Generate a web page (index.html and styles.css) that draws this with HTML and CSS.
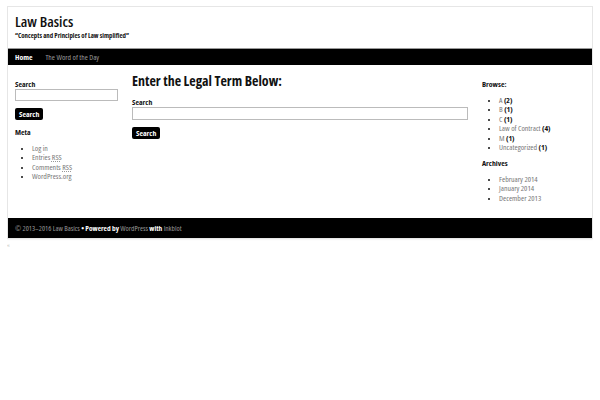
FILE: index.html
```html
<!DOCTYPE html>
<html><head><meta charset="utf-8"><link rel="stylesheet" href="styles.css"></head>
<body>
<div class="page">
  <header class="site-header">
    <h1 class="site-title">Law Basics</h1>
    <p class="tagline">“Concepts and Principles of Law simplified”</p>
  </header>
  <nav class="menu">
    <a class="current" href="#">Home</a>
    <a href="#">The Word of the Day</a>
  </nav>
  <div class="content">
    <aside class="sidebar">
      <section class="widget">
        <label class="label">Search</label>
        <input class="field" type="text">
        <button class="btn">Search</button>
      </section>
      <section class="widget">
        <h3 class="widget-title">Meta</h3>
        <ul class="list">
          <li><a href="#">Log in</a></li>
          <li><a href="#">Entries <abbr>RSS</abbr></a></li>
          <li><a href="#">Comments <abbr>RSS</abbr></a></li>
          <li><a href="#">WordPress.org</a></li>
        </ul>
      </section>
    </aside>
    <main class="main">
      <h2 class="page-title">Enter the Legal Term Below:</h2>
      <label class="label">Search</label>
      <input class="field wide" type="text">
      <button class="btn">Search</button>
    </main>
    <aside class="sidebar">
      <section class="widget">
        <h3 class="widget-title first">Browse:</h3>
        <ul class="list">
          <li><a href="#">A</a> <b>(2)</b></li>
          <li><a href="#">B</a> <b>(1)</b></li>
          <li><a href="#">C</a> <b>(1)</b></li>
          <li><a href="#">Law of Contract</a> <b>(4)</b></li>
          <li><a href="#">M</a> <b>(1)</b></li>
          <li><a href="#">Uncategorized</a> <b>(1)</b></li>
        </ul>
      </section>
      <section class="widget">
        <h3 class="widget-title archives">Archives</h3>
        <ul class="list">
          <li><a href="#">February 2014</a></li>
          <li><a href="#">January 2014</a></li>
          <li><a href="#">December 2013</a></li>
        </ul>
      </section>
    </aside>
  </div>
  <footer class="footer"><span class="dim">© 2013–2016 Law Basics</span> <b>• Powered by</b> <span class="dim">WordPress</span> <b>with</b> <span class="dim">Inkblot</span></footer>
</div>
<div class="after">«</div>
</body></html>
```
FILE: styles.css
```css
html, body { background: #fff; }
body {
  margin: 6px 7px;
  font-family: "Open Sans", sans-serif;
  font-stretch: condensed;
  font-size: 7.8px;
  color: #111;
}
.page {
  width: 586px;
  box-sizing: border-box;
  border: 1px solid #e6e6e6;
  box-shadow: 0 0 2px rgba(0,0,0,0.12);
  background: #fff;
}
.site-header {
  height: 41px;
  padding: 5px 7px 0;
  box-sizing: border-box;
}
.site-title {
  margin: 0;
  font-size: 15px;
  line-height: 18px;
  font-weight: 600;
  color: #111;
}
.tagline {
  margin: 1px 0 0;
  font-size: 6.8px;
  font-weight: 700;
  line-height: 9px;
}
.menu {
  background: #000;
  height: 16px;
  display: flex;
  align-items: center;
  gap: 13px;
  padding: 0 7px;
  border-top: 1px solid #999;
}
.menu a {
  color: #999;
  text-decoration: none;
  font-size: 7.7px;
}
.menu a.current { color: #fff; font-weight: 700; }
.content {
  display: flex;
  gap: 14px;
  padding: 7px 7px 0;
  height: 153px;
  box-sizing: border-box;
}
.sidebar { width: 103px; flex: none; padding-top: 7px; }
.main { width: 336px; flex: none; display: flex; flex-direction: column; align-items: flex-start; }
.widget { display: flex; flex-direction: column; align-items: flex-start; }
.label { font-weight: 700; font-size: 7.8px; line-height: 10px; }
.field {
  box-sizing: border-box;
  width: 103px;
  height: 12px;
  border: 1px solid #bbb;
  margin: 0 0 7px;
  padding: 0;
  background: #fff;
}
.field.wide { width: 336px; height: 13px; }
.btn {
  background: #000;
  color: #fff;
  border: 0;
  border-radius: 2px;
  font-family: inherit;
  font-stretch: condensed;
  font-weight: 700;
  font-size: 7.8px;
  height: 12px;
  padding: 0 4px;
  line-height: 12px;
}
.widget-title {
  margin: 7px 0 0;
  font-size: 7.8px;
  line-height: 10px;
  font-weight: 700;
}
.widget-title.first { margin-top: 0; }
.widget-title.archives { margin-top: 5.5px; }
.page-title {
  margin: 0 0 7px;
  font-size: 14px;
  line-height: 18px;
  font-weight: 700;
}
.list {
  margin: 7px 0 0;
  padding-left: 17px;
  line-height: 9.4px;
}
.list li { font-size: 7.8px; }
.list li::marker { color: #111; font-size: 6px; }
.list a { color: #777; text-decoration: none; }
.list b { font-weight: 700; color: #111; }
abbr { text-decoration: underline dotted #999; }
.footer {
  background: #000;
  height: 20px;
  line-height: 20px;
  padding: 0 7px;
  color: #fff;
  font-size: 7.4px;
}
.footer .dim { color: #999; }
.footer b { font-weight: 700; }
.after { font-size: 6px; color: #bbb; margin-top: 2px; line-height: 8px; }
```
